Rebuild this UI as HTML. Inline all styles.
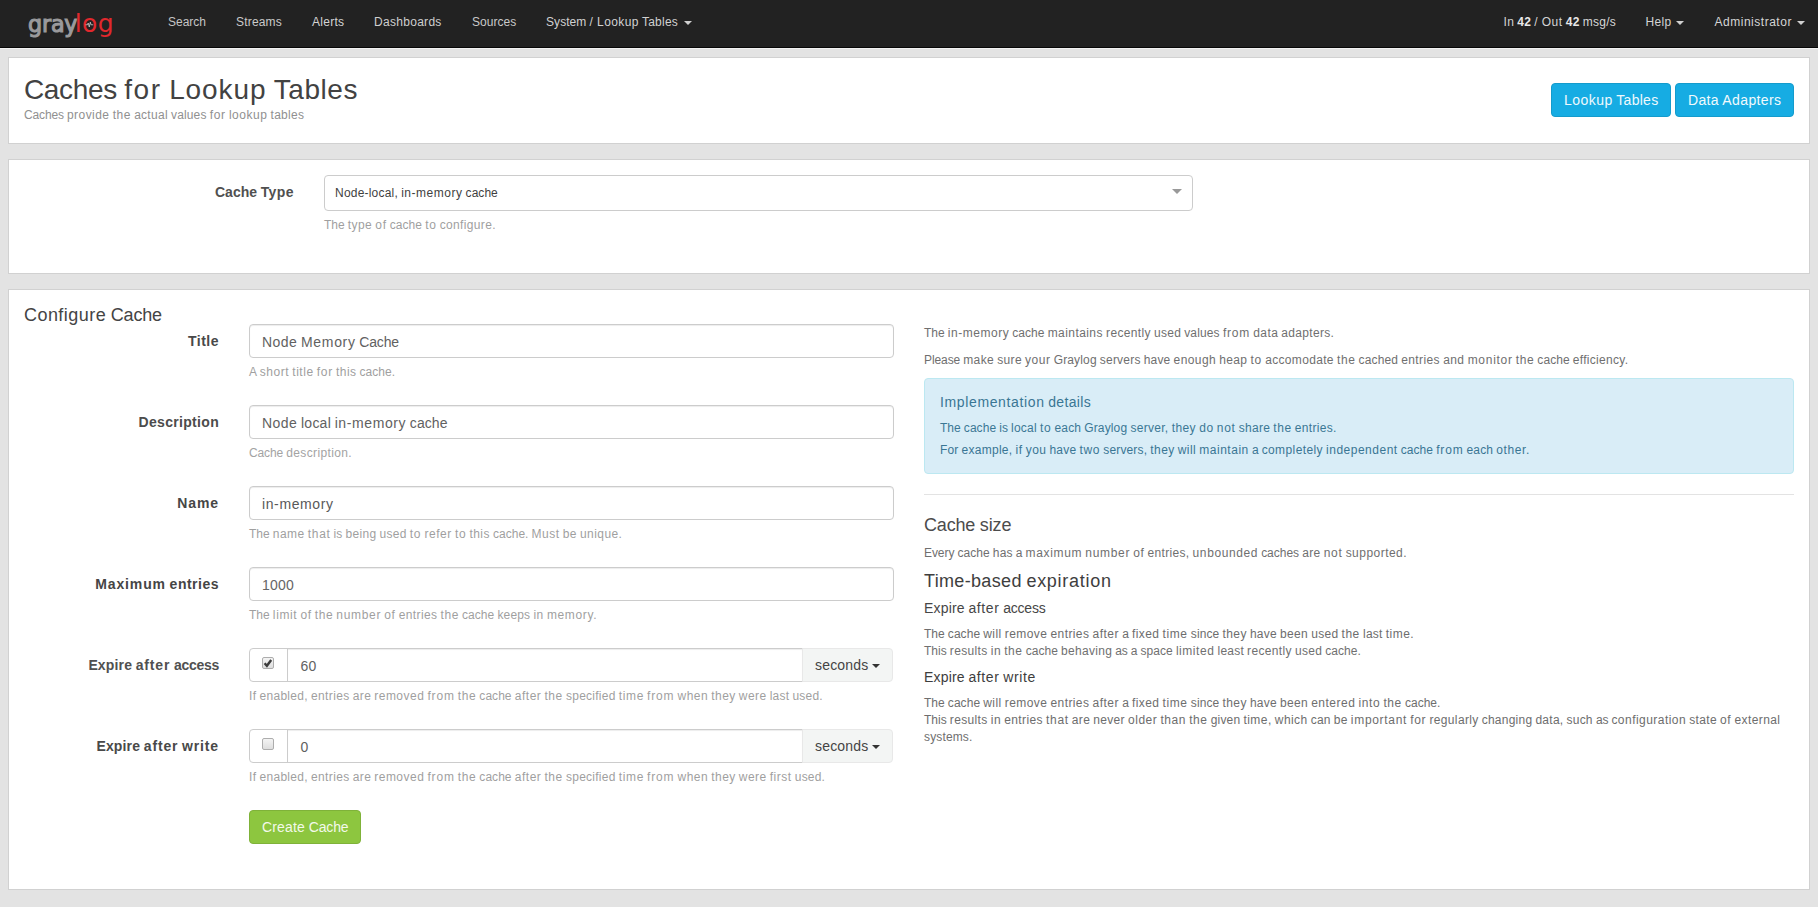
<!DOCTYPE html>
<html lang="en">
<head>
<meta charset="utf-8">
<title>Graylog - Caches for Lookup Tables</title>
<style>
html,body{margin:0;padding:0}
body{width:1818px;height:907px;overflow:hidden;background:#e3e3e3;font-family:"Liberation Sans",sans-serif;font-size:12px;color:#333;position:relative}
.abs,.t,.box,.inp,.btn{position:absolute;box-sizing:border-box}
.t{white-space:pre;display:block}
.t span{display:inline-block}
#nav{position:absolute;left:0;top:0;width:1818px;height:48px;background:#222;border-bottom:1px solid #080808;box-sizing:border-box;box-shadow:0 1px 0 rgba(255,255,255,.55)}
.panel{position:absolute;left:8px;width:1802px;box-sizing:border-box;background:#fff;border:1px solid #d1d1d1}
.inp{background:#fff;border:1px solid #ccc;border-radius:4px;box-shadow:inset 0 1px 1px rgba(0,0,0,.075)}
.btn{border-radius:4px;border:1px solid}
.caret{position:absolute;width:0;height:0;border-left:4px solid transparent;border-right:4px solid transparent;border-top:4px solid #d0d0d0}
.addon{position:absolute;box-sizing:border-box;background:#fff;border:1px solid #ccc}
.cb{position:absolute;box-sizing:border-box;width:12px;height:12px;border:1px solid #adadad;border-radius:2px;background:linear-gradient(#f4f4f4,#dedede)}
</style>
</head>
<body>
<div id="nav"></div>
<!-- logo -->
<span class="t" style="left:28.4px;top:9px;font-size:22.5px;line-height:30px;font-family:'DejaVu Sans',sans-serif;color:#9a9a9c;letter-spacing:-0.2px;-webkit-text-stroke:1.1px #9a9a9c;transform:scaleX(0.99);transform-origin:0 0">gray</span>
<span class="t" style="left:74.8px;top:9px;font-size:25px;line-height:30px;font-family:'DejaVu Sans',sans-serif;color:#e1282d;letter-spacing:0.3px">log</span>
<svg class="abs" style="left:85px;top:20px" width="9" height="9" viewBox="0 0 9 9"><path d="M0.5 4.8 H2.4 L3.2 3 L4.3 7 L5.3 2.2 L6.1 4.8 H8.2" fill="none" stroke="#cfcfcf" stroke-width="0.8"/></svg>
<span class="caret" style="left:684px;top:21px"></span>
<span class="caret" style="left:1676px;top:21px"></span>
<span class="caret" style="left:1797px;top:21px"></span>


<div class="panel" style="top:57px;height:87px"></div>
<div class="panel" style="top:159px;height:115px"></div>
<div class="panel" style="top:289px;height:601px"></div>

<div class="btn" style="left:1551px;top:83px;width:120px;height:34px;background:#16ace3;border-color:#149bcc"></div>
<div class="btn" style="left:1675px;top:83px;width:119px;height:34px;background:#16ace3;border-color:#149bcc"></div>

<!-- select -->
<div class="inp" style="left:324px;top:175px;width:869px;height:36px;box-shadow:none"></div>
<span class="caret" style="left:1172px;top:189px;border-top-color:#999;border-width:5px 5px 0 5px"></span>

<!-- inputs -->
<div class="inp" style="left:249px;top:324px;width:645px;height:34px"></div>
<div class="inp" style="left:249px;top:405px;width:645px;height:34px"></div>
<div class="inp" style="left:249px;top:486px;width:645px;height:34px"></div>
<div class="inp" style="left:249px;top:567px;width:645px;height:34px"></div>

<!-- input groups -->
<div class="addon" style="left:249px;top:648px;width:39px;height:34px;border-radius:4px 0 0 4px"></div>
<div class="inp" style="left:287px;top:648px;width:516px;height:34px;border-radius:0"></div>
<div class="addon" style="left:802px;top:648px;width:91px;height:34px;border-radius:0 4px 4px 0;background:#f3f5f4;border-color:#e8e8e8"></div>
<div class="addon" style="left:249px;top:729px;width:39px;height:34px;border-radius:4px 0 0 4px"></div>
<div class="inp" style="left:287px;top:729px;width:516px;height:34px;border-radius:0"></div>
<div class="addon" style="left:802px;top:729px;width:91px;height:34px;border-radius:0 4px 4px 0;background:#f3f5f4;border-color:#e8e8e8"></div>
<span class="caret" style="left:872px;top:664px;border-top-color:#333"></span>
<span class="caret" style="left:872px;top:745px;border-top-color:#333"></span>
<div class="cb" style="left:262px;top:657px"><svg width="12" height="12" viewBox="0 0 12 12" style="position:absolute;left:-1px;top:-1px"><path d="M2.6 6.2 L4.9 8.8 L9.2 3" fill="none" stroke="#3c3c3c" stroke-width="2.4"/></svg></div>
<div class="cb" style="left:262px;top:738px"></div>

<div class="btn" style="left:249px;top:810px;width:112px;height:34px;background:#8dc63f;border-color:#7fb239"></div>

<!-- alert -->
<div class="abs" style="left:924px;top:378px;width:870px;height:96px;background:#d9edf7;border:1px solid #bce8f1;border-radius:4px"></div>
<div class="abs" style="left:924px;top:494px;width:870px;height:1px;background:#e3e3e3"></div>

<div class="t" style="left:168.00px;top:14px;font-size:12px;line-height:17px;color:#c5c5c5;word-spacing:-0.219px"><span style="width:38.00px;letter-spacing:-0.005px">Search</span></div>
<div class="t" style="left:236.00px;top:14px;font-size:12px;line-height:17px;color:#cacaca;word-spacing:-0.219px"><span style="width:46.00px;letter-spacing:0.188px">Streams</span></div>
<div class="t" style="left:312.00px;top:14px;font-size:12px;line-height:17px;color:#d4d4d4;word-spacing:-0.219px"><span style="width:32.27px;letter-spacing:0.263px">Alerts</span></div>
<div class="t" style="left:374.00px;top:14px;font-size:12px;line-height:17px;color:#cfcfcf;word-spacing:-0.219px"><span style="width:67.66px;letter-spacing:0.294px">Dashboards</span></div>
<div class="t" style="left:472.00px;top:14px;font-size:12px;line-height:17px;color:#c9c9c9;word-spacing:-0.219px"><span style="width:44.28px;letter-spacing:0.036px">Sources</span></div>
<div class="t" style="left:546.00px;top:14px;font-size:12px;line-height:17px;color:#d1d1d1;word-spacing:-0.219px"><span style="width:40.44px;letter-spacing:0.070px">System</span> <span style="width:4.41px;letter-spacing:1.062px">/</span> <span style="width:41.72px;letter-spacing:0.391px">Lookup</span> <span style="width:36.11px;letter-spacing:0.237px">Tables</span></div>
<div class="t" style="left:1503.50px;top:14px;font-size:12px;line-height:17px;color:#d1d1d1;word-spacing:-0.219px"><span style="width:10.72px;letter-spacing:0.352px">In</span></div>
<div class="t" style="left:1517.33px;top:14px;font-size:12px;line-height:17px;color:#e8e8e8;word-spacing:-0.188px;font-weight:700"><span style="width:13.73px;letter-spacing:0.188px">42</span></div>
<div class="t" style="left:1534.18px;top:14px;font-size:12px;line-height:17px;color:#d4d4d4;word-spacing:-0.219px"><span style="width:4.41px;letter-spacing:1.062px">/</span> <span style="width:20.98px;letter-spacing:0.547px">Out</span></div>
<div class="t" style="left:1565.80px;top:14px;font-size:12px;line-height:17px;color:#e7e7e7;word-spacing:-0.188px;font-weight:700"><span style="width:13.73px;letter-spacing:0.188px">42</span></div>
<div class="t" style="left:1582.65px;top:14px;font-size:12px;line-height:17px;color:#d7d7d7;word-spacing:-0.219px"><span style="width:33.47px;letter-spacing:0.291px">msg/s</span></div>
<div class="t" style="left:1645.50px;top:14px;font-size:12px;line-height:17px;color:#d4d4d4;word-spacing:-0.219px"><span style="width:25.97px;letter-spacing:0.320px">Help</span></div>
<div class="t" style="left:1714.50px;top:14px;font-size:12px;line-height:17px;color:#d5d5d5;word-spacing:-0.219px"><span style="width:77.44px;letter-spacing:0.519px">Administrator</span></div>
<div class="t" style="left:24.00px;top:72px;font-size:28px;line-height:36px;color:#424242;word-spacing:-0.500px"><span style="width:92.86px;letter-spacing:-0.346px">Caches</span> <span style="width:37.72px;letter-spacing:1.677px">for</span> <span style="width:97.33px;letter-spacing:0.909px">Lookup</span> <span style="width:84.25px;letter-spacing:0.552px">Tables</span></div>
<div class="t" style="left:24.00px;top:107px;font-size:12px;line-height:17px;color:#909090;word-spacing:-0.219px"><span style="width:39.80px;letter-spacing:-0.148px">Caches</span> <span style="width:42.58px;letter-spacing:0.460px">provide</span> <span style="width:18.38px;letter-spacing:0.562px">the</span> <span style="width:33.75px;letter-spacing:0.286px">actual</span> <span style="width:35.52px;letter-spacing:0.138px">values</span> <span style="width:16.17px;letter-spacing:0.719px">for</span> <span style="width:38.48px;letter-spacing:0.518px">lookup</span> <span style="width:33.78px;letter-spacing:0.292px">tables</span></div>
<div class="t" style="left:1564.00px;top:90px;font-size:14px;line-height:20px;color:#eff9fd;word-spacing:-0.250px"><span style="width:48.67px;letter-spacing:0.456px">Lookup</span> <span style="width:42.12px;letter-spacing:0.276px">Tables</span></div>
<div class="t" style="left:1688.00px;top:90px;font-size:14px;line-height:20px;color:#f1fafd;word-spacing:-0.250px"><span style="width:30.72px;letter-spacing:0.285px">Data</span> <span style="width:59.02px;letter-spacing:0.371px">Adapters</span></div>
<div class="t" style="left:215.00px;top:182px;font-size:14px;line-height:20px;color:#505050;word-spacing:-0.234px;font-weight:700"><span style="width:42.06px;letter-spacing:0.006px">Cache</span> <span style="width:33.20px;letter-spacing:0.391px">Type</span></div>
<div class="t" style="left:335.00px;top:185px;font-size:12px;line-height:17px;color:#3f3f3f;word-spacing:-0.219px"><span style="width:63.00px;letter-spacing:0.209px">Node-local,</span> <span style="width:61.34px;letter-spacing:0.519px">in-memory</span> <span style="width:32.27px;letter-spacing:0.047px">cache</span></div>
<div class="t" style="left:324.00px;top:217px;font-size:12px;line-height:17px;color:#9f9f9f;word-spacing:-0.219px"><span style="width:20.72px;letter-spacing:0.010px">The</span> <span style="width:24.38px;letter-spacing:0.422px">type</span> <span style="width:11.27px;letter-spacing:0.625px">of</span> <span style="width:32.27px;letter-spacing:0.047px">cache</span> <span style="width:11.50px;letter-spacing:0.742px">to</span> <span style="width:56.06px;letter-spacing:0.336px">configure.</span></div>
<div class="t" style="left:24.00px;top:303px;font-size:18px;line-height:24px;color:#444444;word-spacing:-0.328px"><span style="width:82.09px;letter-spacing:0.450px">Configure</span> <span style="width:51.11px;letter-spacing:-0.184px">Cache</span></div>
<div class="t" style="left:187.98px;top:331px;font-size:14px;line-height:20px;color:#494949;word-spacing:-0.234px;font-weight:700"><span style="width:31.02px;letter-spacing:0.497px">Title</span></div>
<div class="t" style="left:262.00px;top:332px;font-size:14px;line-height:20px;color:#616161;word-spacing:-0.250px"><span style="width:35.39px;letter-spacing:0.480px">Node</span> <span style="width:54.58px;letter-spacing:0.669px">Memory</span> <span style="width:39.77px;letter-spacing:-0.141px">Cache</span></div>
<div class="t" style="left:249.00px;top:364px;font-size:12px;line-height:17px;color:#a0a0a0;word-spacing:-0.219px"><span style="width:7.59px;letter-spacing:-0.422px">A</span> <span style="width:29.48px;letter-spacing:0.559px">short</span> <span style="width:21.36px;letter-spacing:0.534px">title</span> <span style="width:16.17px;letter-spacing:0.719px">for</span> <span style="width:20.39px;letter-spacing:0.426px">this</span> <span style="width:35.42px;letter-spacing:0.010px">cache.</span></div>
<div class="t" style="left:138.50px;top:412px;font-size:14px;line-height:20px;color:#4c4c4c;word-spacing:-0.234px;font-weight:700"><span style="width:80.50px;letter-spacing:0.317px">Description</span></div>
<div class="t" style="left:262.00px;top:413px;font-size:14px;line-height:20px;color:#616161;word-spacing:-0.250px"><span style="width:35.39px;letter-spacing:0.480px">Node</span> <span style="width:29.98px;letter-spacing:0.237px">local</span> <span style="width:71.58px;letter-spacing:0.606px">in-memory</span> <span style="width:37.64px;letter-spacing:0.056px">cache</span></div>
<div class="t" style="left:249.00px;top:445px;font-size:12px;line-height:17px;color:#a3a3a3;word-spacing:-0.219px"><span style="width:34.08px;letter-spacing:-0.122px">Cache</span> <span style="width:65.86px;letter-spacing:0.374px">description.</span></div>
<div class="t" style="left:177.14px;top:493px;font-size:14px;line-height:20px;color:#464646;word-spacing:-0.234px;font-weight:700"><span style="width:41.86px;letter-spacing:0.930px">Name</span></div>
<div class="t" style="left:262.00px;top:494px;font-size:14px;line-height:20px;color:#595959;word-spacing:-0.250px"><span style="width:71.58px;letter-spacing:0.606px">in-memory</span></div>
<div class="t" style="left:249.00px;top:526px;font-size:12px;line-height:17px;color:#9f9f9f;word-spacing:-0.219px"><span style="width:20.72px;letter-spacing:0.010px">The</span> <span style="width:31.88px;letter-spacing:0.461px">name</span> <span style="width:22.59px;letter-spacing:0.645px">that</span> <span style="width:8.75px;letter-spacing:0.039px">is</span> <span style="width:30.98px;letter-spacing:0.322px">being</span> <span style="width:27.17px;letter-spacing:0.285px">used</span> <span style="width:11.50px;letter-spacing:0.742px">to</span> <span style="width:27.33px;letter-spacing:0.528px">refer</span> <span style="width:11.50px;letter-spacing:0.742px">to</span> <span style="width:20.39px;letter-spacing:0.426px">this</span> <span style="width:35.42px;letter-spacing:0.010px">cache.</span> <span style="width:28.16px;letter-spacing:0.535px">Must</span> <span style="width:14.09px;letter-spacing:0.367px">be</span> <span style="width:42.34px;letter-spacing:0.424px">unique.</span></div>
<div class="t" style="left:95.22px;top:574px;font-size:14px;line-height:20px;color:#454545;word-spacing:-0.234px;font-weight:700"><span style="width:70.72px;letter-spacing:0.877px">Maximum</span> <span style="width:49.42px;letter-spacing:0.500px">entries</span></div>
<div class="t" style="left:262.00px;top:575px;font-size:14px;line-height:20px;color:#666666;word-spacing:-0.250px"><span style="width:32.03px;letter-spacing:0.219px">1000</span></div>
<div class="t" style="left:249.00px;top:607px;font-size:12px;line-height:17px;color:#9f9f9f;word-spacing:-0.219px"><span style="width:20.72px;letter-spacing:0.010px">The</span> <span style="width:24.48px;letter-spacing:0.631px">limit</span> <span style="width:11.27px;letter-spacing:0.625px">of</span> <span style="width:18.38px;letter-spacing:0.562px">the</span> <span style="width:44.81px;letter-spacing:0.688px">number</span> <span style="width:11.27px;letter-spacing:0.625px">of</span> <span style="width:38.77px;letter-spacing:0.391px">entries</span> <span style="width:18.38px;letter-spacing:0.562px">the</span> <span style="width:32.27px;letter-spacing:0.047px">cache</span> <span style="width:32.84px;letter-spacing:0.163px">keeps</span> <span style="width:10.39px;letter-spacing:0.523px">in</span> <span style="width:50.25px;letter-spacing:0.638px">memory.</span></div>
<div class="t" style="left:88.38px;top:655px;font-size:14px;line-height:20px;color:#505050;word-spacing:-0.234px;font-weight:700"><span style="width:43.70px;letter-spacing:0.148px">Expire</span> <span style="width:34.59px;letter-spacing:0.847px">after</span> <span style="width:45.05px;letter-spacing:-0.279px">access</span></div>
<div class="t" style="left:300.50px;top:656px;font-size:14px;line-height:20px;color:#626262;word-spacing:-0.250px"><span style="width:16.02px;letter-spacing:0.219px">60</span></div>
<div class="t" style="left:249.00px;top:688px;font-size:12px;line-height:17px;color:#9f9f9f;word-spacing:-0.219px"><span style="width:7.39px;letter-spacing:0.359px">If</span> <span style="width:48.33px;letter-spacing:0.285px">enabled,</span> <span style="width:38.77px;letter-spacing:0.391px">entries</span> <span style="width:18.31px;letter-spacing:0.323px">are</span> <span style="width:50.05px;letter-spacing:0.480px">removed</span> <span style="width:27.28px;letter-spacing:0.820px">from</span> <span style="width:18.38px;letter-spacing:0.562px">the</span> <span style="width:32.27px;letter-spacing:0.047px">cache</span> <span style="width:26.62px;letter-spacing:0.522px">after</span> <span style="width:18.38px;letter-spacing:0.562px">the</span> <span style="width:49.73px;letter-spacing:0.262px">specified</span> <span style="width:25.16px;letter-spacing:0.621px">time</span> <span style="width:27.28px;letter-spacing:0.820px">from</span> <span style="width:30.77px;letter-spacing:0.520px">when</span> <span style="width:24.39px;letter-spacing:0.426px">they</span> <span style="width:27.69px;letter-spacing:0.418px">were</span> <span style="width:19.70px;letter-spacing:0.254px">last</span> <span style="width:30.31px;letter-spacing:0.191px">used.</span></div>
<div class="t" style="left:96.45px;top:736px;font-size:14px;line-height:20px;color:#494949;word-spacing:-0.234px;font-weight:700"><span style="width:43.70px;letter-spacing:0.148px">Expire</span> <span style="width:34.59px;letter-spacing:0.847px">after</span> <span style="width:36.97px;letter-spacing:0.856px">write</span></div>
<div class="t" style="left:300.50px;top:737px;font-size:14px;line-height:20px;color:#5f5f5f;word-spacing:-0.250px"><span style="width:8.02px;letter-spacing:0.219px">0</span></div>
<div class="t" style="left:249.00px;top:769px;font-size:12px;line-height:17px;color:#9f9f9f;word-spacing:-0.219px"><span style="width:7.39px;letter-spacing:0.359px">If</span> <span style="width:48.33px;letter-spacing:0.285px">enabled,</span> <span style="width:38.77px;letter-spacing:0.391px">entries</span> <span style="width:18.31px;letter-spacing:0.323px">are</span> <span style="width:50.05px;letter-spacing:0.480px">removed</span> <span style="width:27.28px;letter-spacing:0.820px">from</span> <span style="width:18.38px;letter-spacing:0.562px">the</span> <span style="width:32.27px;letter-spacing:0.047px">cache</span> <span style="width:26.62px;letter-spacing:0.522px">after</span> <span style="width:18.38px;letter-spacing:0.562px">the</span> <span style="width:49.73px;letter-spacing:0.262px">specified</span> <span style="width:25.16px;letter-spacing:0.621px">time</span> <span style="width:27.28px;letter-spacing:0.820px">from</span> <span style="width:30.77px;letter-spacing:0.520px">when</span> <span style="width:24.39px;letter-spacing:0.426px">they</span> <span style="width:27.69px;letter-spacing:0.418px">were</span> <span style="width:21.97px;letter-spacing:0.525px">first</span> <span style="width:30.31px;letter-spacing:0.191px">used.</span></div>
<div class="t" style="left:815.00px;top:655px;font-size:14px;line-height:20px;color:#444444;word-spacing:-0.250px"><span style="width:53.48px;letter-spacing:0.190px">seconds</span></div>
<div class="t" style="left:815.00px;top:736px;font-size:14px;line-height:20px;color:#444444;word-spacing:-0.250px"><span style="width:53.48px;letter-spacing:0.190px">seconds</span></div>
<div class="t" style="left:262.00px;top:817px;font-size:14px;line-height:20px;color:#f3f9ea;word-spacing:-0.250px"><span style="width:43.05px;letter-spacing:0.169px">Create</span> <span style="width:39.77px;letter-spacing:-0.141px">Cache</span></div>
<div class="t" style="left:924.00px;top:325px;font-size:12px;line-height:17px;color:#6f6f6f;word-spacing:-0.219px"><span style="width:20.72px;letter-spacing:0.010px">The</span> <span style="width:61.34px;letter-spacing:0.519px">in-memory</span> <span style="width:32.27px;letter-spacing:0.047px">cache</span> <span style="width:55.22px;letter-spacing:0.429px">maintains</span> <span style="width:44.81px;letter-spacing:0.348px">recently</span> <span style="width:27.17px;letter-spacing:0.285px">used</span> <span style="width:35.52px;letter-spacing:0.138px">values</span> <span style="width:27.28px;letter-spacing:0.820px">from</span> <span style="width:24.97px;letter-spacing:0.402px">data</span> <span style="width:52.81px;letter-spacing:0.307px">adapters.</span></div>
<div class="t" style="left:924.00px;top:352px;font-size:12px;line-height:17px;color:#6f6f6f;word-spacing:-0.219px"><span style="width:36.12px;letter-spacing:-0.096px">Please</span> <span style="width:30.83px;letter-spacing:0.371px">make</span> <span style="width:24.73px;letter-spacing:0.348px">sure</span> <span style="width:25.50px;letter-spacing:0.539px">your</span> <span style="width:43.08px;letter-spacing:0.150px">Graylog</span> <span style="width:40.72px;letter-spacing:0.196px">servers</span> <span style="width:26.77px;letter-spacing:0.184px">have</span> <span style="width:42.56px;letter-spacing:0.419px">enough</span> <span style="width:28.11px;letter-spacing:0.352px">heap</span> <span style="width:11.50px;letter-spacing:0.742px">to</span> <span style="width:68.75px;letter-spacing:0.338px">accomodate</span> <span style="width:18.38px;letter-spacing:0.562px">the</span> <span style="width:39.61px;letter-spacing:0.151px">cached</span> <span style="width:38.77px;letter-spacing:0.391px">entries</span> <span style="width:21.38px;letter-spacing:0.448px">and</span> <span style="width:45.12px;letter-spacing:0.730px">monitor</span> <span style="width:18.38px;letter-spacing:0.562px">the</span> <span style="width:32.27px;letter-spacing:0.047px">cache</span> <span style="width:55.62px;letter-spacing:0.307px">efficiency.</span></div>
<div class="t" style="left:940.00px;top:392px;font-size:14px;line-height:20px;color:#397694;word-spacing:-0.250px"><span style="width:104.55px;letter-spacing:0.631px">Implementation</span> <span style="width:42.94px;letter-spacing:0.353px">details</span></div>
<div class="t" style="left:940.00px;top:420px;font-size:12px;line-height:17px;color:#3b7895;word-spacing:-0.219px"><span style="width:20.72px;letter-spacing:0.010px">The</span> <span style="width:32.27px;letter-spacing:0.047px">cache</span> <span style="width:8.75px;letter-spacing:0.039px">is</span> <span style="width:25.70px;letter-spacing:0.203px">local</span> <span style="width:11.50px;letter-spacing:0.742px">to</span> <span style="width:26.52px;letter-spacing:0.121px">each</span> <span style="width:43.08px;letter-spacing:0.150px">Graylog</span> <span style="width:38.11px;letter-spacing:0.299px">server,</span> <span style="width:24.39px;letter-spacing:0.426px">they</span> <span style="width:14.56px;letter-spacing:0.602px">do</span> <span style="width:18.86px;letter-spacing:0.724px">not</span> <span style="width:31.39px;letter-spacing:0.272px">share</span> <span style="width:18.38px;letter-spacing:0.562px">the</span> <span style="width:41.92px;letter-spacing:0.320px">entries.</span></div>
<div class="t" style="left:940.00px;top:442px;font-size:12px;line-height:17px;color:#397694;word-spacing:-0.219px"><span style="width:18.33px;letter-spacing:0.109px">For</span> <span style="width:51.02px;letter-spacing:0.289px">example,</span> <span style="width:7.08px;letter-spacing:0.539px">if</span> <span style="width:20.59px;letter-spacing:0.411px">you</span> <span style="width:26.77px;letter-spacing:0.184px">have</span> <span style="width:20.80px;letter-spacing:0.703px">two</span> <span style="width:43.83px;letter-spacing:0.143px">servers,</span> <span style="width:24.39px;letter-spacing:0.426px">they</span> <span style="width:18.39px;letter-spacing:0.430px">will</span> <span style="width:49.50px;letter-spacing:0.518px">maintain</span> <span style="width:6.67px;letter-spacing:-0.016px">a</span> <span style="width:61.25px;letter-spacing:0.389px">completely</span> <span style="width:71.62px;letter-spacing:0.504px">independent</span> <span style="width:32.27px;letter-spacing:0.047px">cache</span> <span style="width:27.28px;letter-spacing:0.820px">from</span> <span style="width:26.52px;letter-spacing:0.121px">each</span> <span style="width:33.66px;letter-spacing:0.604px">other.</span></div>
<div class="t" style="left:924.00px;top:513px;font-size:18px;line-height:24px;color:#4c4c4c;word-spacing:-0.328px"><span style="width:51.11px;letter-spacing:-0.184px">Cache</span> <span style="width:31.67px;letter-spacing:-0.086px">size</span></div>
<div class="t" style="left:924.00px;top:545px;font-size:12px;line-height:17px;color:#6f6f6f;word-spacing:-0.219px"><span style="width:30.33px;letter-spacing:-0.072px">Every</span> <span style="width:32.27px;letter-spacing:0.047px">cache</span> <span style="width:19.75px;letter-spacing:0.130px">has</span> <span style="width:6.67px;letter-spacing:-0.016px">a</span> <span style="width:56.67px;letter-spacing:0.665px">maximum</span> <span style="width:44.81px;letter-spacing:0.688px">number</span> <span style="width:11.27px;letter-spacing:0.625px">of</span> <span style="width:41.88px;letter-spacing:0.314px">entries,</span> <span style="width:65.42px;letter-spacing:0.594px">unbounded</span> <span style="width:37.98px;letter-spacing:-0.008px">caches</span> <span style="width:18.31px;letter-spacing:0.323px">are</span> <span style="width:18.86px;letter-spacing:0.724px">not</span> <span style="width:61.41px;letter-spacing:0.469px">supported.</span></div>
<div class="t" style="left:924.00px;top:569px;font-size:18px;line-height:24px;color:#3e3e3e;word-spacing:-0.328px"><span style="width:97.73px;letter-spacing:0.336px">Time-based</span> <span style="width:85.28px;letter-spacing:0.723px">expiration</span></div>
<div class="t" style="left:924.00px;top:598px;font-size:14px;line-height:20px;color:#464646;word-spacing:-0.250px"><span style="width:40.80px;letter-spacing:0.185px">Expire</span> <span style="width:31.06px;letter-spacing:0.609px">after</span> <span style="width:42.41px;letter-spacing:-0.195px">access</span></div>
<div class="t" style="left:924.00px;top:626px;font-size:12px;line-height:17px;color:#6d6d6d;word-spacing:-0.219px"><span style="width:20.72px;letter-spacing:0.010px">The</span> <span style="width:32.27px;letter-spacing:0.047px">cache</span> <span style="width:18.39px;letter-spacing:0.430px">will</span> <span style="width:42.70px;letter-spacing:0.448px">remove</span> <span style="width:38.77px;letter-spacing:0.391px">entries</span> <span style="width:26.62px;letter-spacing:0.522px">after</span> <span style="width:6.67px;letter-spacing:-0.016px">a</span> <span style="width:27.44px;letter-spacing:0.416px">fixed</span> <span style="width:25.16px;letter-spacing:0.621px">time</span> <span style="width:28.59px;letter-spacing:0.116px">since</span> <span style="width:24.39px;letter-spacing:0.426px">they</span> <span style="width:26.77px;letter-spacing:0.184px">have</span> <span style="width:28.19px;letter-spacing:0.371px">been</span> <span style="width:27.17px;letter-spacing:0.285px">used</span> <span style="width:18.38px;letter-spacing:0.562px">the</span> <span style="width:19.70px;letter-spacing:0.254px">last</span> <span style="width:28.31px;letter-spacing:0.459px">time.</span></div>
<div class="t" style="left:924.00px;top:643px;font-size:12px;line-height:17px;color:#707070;word-spacing:-0.219px"><span style="width:22.72px;letter-spacing:0.012px">This</span> <span style="width:37.75px;letter-spacing:0.344px">results</span> <span style="width:10.39px;letter-spacing:0.523px">in</span> <span style="width:18.38px;letter-spacing:0.562px">the</span> <span style="width:32.27px;letter-spacing:0.047px">cache</span> <span style="width:51.02px;letter-spacing:0.287px">behaving</span> <span style="width:12.39px;letter-spacing:-0.148px">as</span> <span style="width:6.67px;letter-spacing:-0.016px">a</span> <span style="width:32.22px;letter-spacing:0.037px">space</span> <span style="width:38.56px;letter-spacing:0.554px">limited</span> <span style="width:26.44px;letter-spacing:0.216px">least</span> <span style="width:44.81px;letter-spacing:0.348px">recently</span> <span style="width:27.17px;letter-spacing:0.285px">used</span> <span style="width:35.42px;letter-spacing:0.010px">cache.</span></div>
<div class="t" style="left:924.00px;top:667px;font-size:14px;line-height:20px;color:#3d3d3d;word-spacing:-0.250px"><span style="width:40.80px;letter-spacing:0.185px">Expire</span> <span style="width:31.06px;letter-spacing:0.609px">after</span> <span style="width:32.97px;letter-spacing:0.681px">write</span></div>
<div class="t" style="left:924.00px;top:695px;font-size:12px;line-height:17px;color:#6e6e6e;word-spacing:-0.219px"><span style="width:20.72px;letter-spacing:0.010px">The</span> <span style="width:32.27px;letter-spacing:0.047px">cache</span> <span style="width:18.39px;letter-spacing:0.430px">will</span> <span style="width:42.70px;letter-spacing:0.448px">remove</span> <span style="width:38.77px;letter-spacing:0.391px">entries</span> <span style="width:26.62px;letter-spacing:0.522px">after</span> <span style="width:6.67px;letter-spacing:-0.016px">a</span> <span style="width:27.44px;letter-spacing:0.416px">fixed</span> <span style="width:25.16px;letter-spacing:0.621px">time</span> <span style="width:28.59px;letter-spacing:0.116px">since</span> <span style="width:24.39px;letter-spacing:0.426px">they</span> <span style="width:26.77px;letter-spacing:0.184px">have</span> <span style="width:28.19px;letter-spacing:0.371px">been</span> <span style="width:44.11px;letter-spacing:0.487px">entered</span> <span style="width:21.89px;letter-spacing:0.633px">into</span> <span style="width:18.38px;letter-spacing:0.562px">the</span> <span style="width:35.42px;letter-spacing:0.010px">cache.</span></div>
<div class="t" style="left:924.00px;top:712px;font-size:12px;line-height:17px;color:#6d6d6d;word-spacing:-0.219px"><span style="width:22.72px;letter-spacing:0.012px">This</span> <span style="width:37.75px;letter-spacing:0.344px">results</span> <span style="width:10.39px;letter-spacing:0.523px">in</span> <span style="width:38.77px;letter-spacing:0.391px">entries</span> <span style="width:22.59px;letter-spacing:0.645px">that</span> <span style="width:18.31px;letter-spacing:0.323px">are</span> <span style="width:31.73px;letter-spacing:0.341px">never</span> <span style="width:29.23px;letter-spacing:0.509px">older</span> <span style="width:25.67px;letter-spacing:0.578px">than</span> <span style="width:18.38px;letter-spacing:0.562px">the</span> <span style="width:29.64px;letter-spacing:0.191px">given</span> <span style="width:28.27px;letter-spacing:0.450px">time,</span> <span style="width:32.80px;letter-spacing:0.422px">which</span> <span style="width:19.78px;letter-spacing:0.141px">can</span> <span style="width:14.09px;letter-spacing:0.367px">be</span> <span style="width:56.19px;letter-spacing:0.684px">important</span> <span style="width:16.17px;letter-spacing:0.719px">for</span> <span style="width:49.17px;letter-spacing:0.349px">regularly</span> <span style="width:50.56px;letter-spacing:0.230px">changing</span> <span style="width:28.06px;letter-spacing:0.272px">data,</span> <span style="width:26.19px;letter-spacing:0.207px">such</span> <span style="width:12.39px;letter-spacing:-0.148px">as</span> <span style="width:74.73px;letter-spacing:0.463px">configuration</span> <span style="width:27.69px;letter-spacing:0.334px">state</span> <span style="width:11.27px;letter-spacing:0.625px">of</span> <span style="width:46.00px;letter-spacing:0.412px">external</span></div>
<div class="t" style="left:924.00px;top:729px;font-size:12px;line-height:17px;color:#6f6f6f;word-spacing:-0.219px"><span style="width:48.45px;letter-spacing:0.139px">systems.</span></div>
</body>
</html>
